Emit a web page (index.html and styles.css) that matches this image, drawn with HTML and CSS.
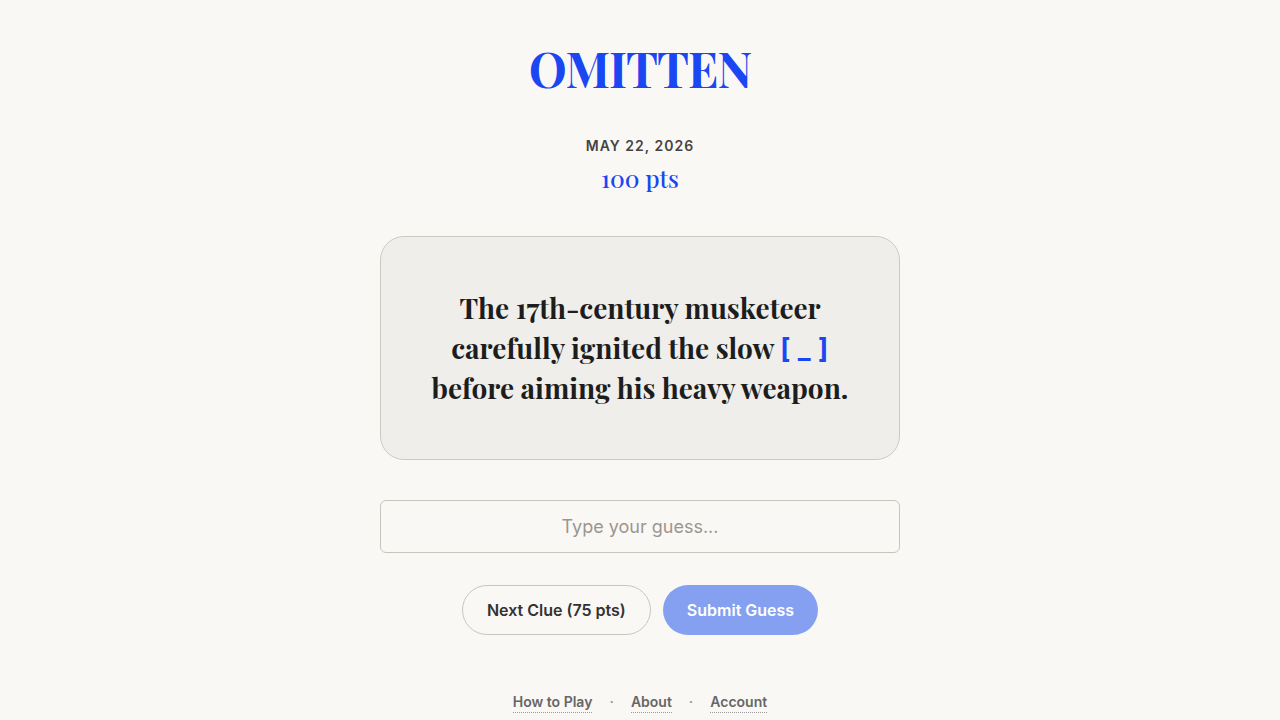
FILE: index.html
```html
<!DOCTYPE html>
<html lang="en">
<head>
    <meta charset="UTF-8">
    <meta name="viewport" content="width=device-width, initial-scale=1.0">
    <title>Omitten</title>
    <link rel="stylesheet" href="styles.css">
</head>
<body>

    <div class="page">
        <h1 class="logo">OMITTEN</h1>

        <div class="meta">
            <div class="date">MAY 22, 2026</div>
            <div class="points">100 pts</div>
        </div>

        <div class="clue-card">
            <p class="clue">The 17th-century musketeer carefully ignited the slow <span class="blank">[ _ ]</span> before aiming his heavy weapon.</p>
        </div>

        <input type="text" class="guess" placeholder="Type your guess...">

        <div class="actions">
            <button class="btn btn-outline" type="button">Next Clue (75 pts)</button>
            <button class="btn btn-primary" type="button">Submit Guess</button>
        </div>

        <nav class="footer">
            <a href="#">How to Play</a>
            <span class="dot">·</span>
            <a href="#">About</a>
            <span class="dot">·</span>
            <a href="#">Account</a>
        </nav>
    </div>

</body>
</html>
```

FILE: styles.css
```css
* {
    margin: 0;
    padding: 0;
    box-sizing: border-box;
}

body {
    background-color: #faf8f5;
    font-family: Inter, "Noto Sans", sans-serif;
    color: #1f1f1f;
}

.page {
    width: 520px;
    margin: 0 auto;
    display: flex;
    flex-direction: column;
    align-items: center;
    padding-top: 38px;
}

.logo {
    font-family: "Playfair Display", "Liberation Serif", serif;
    font-size: 48px;
    font-weight: 700;
    line-height: 60px;
    color: #1a47f2;
    letter-spacing: -1px;
}

.meta {
    margin-top: 38px;
    text-align: center;
}

.date {
    font-size: 14px;
    font-weight: 600;
    letter-spacing: 1px;
    color: #444;
    line-height: 20px;
}

.points {
    font-family: "Playfair Display", "Liberation Serif", serif;
    font-size: 24px;
    font-weight: 500;
    color: #1a47f2;
    line-height: 30px;
    margin-top: 7px;
}

.clue-card {
    width: 520px;
    height: 224px;
    margin-top: 43px;
    background-color: #efeeeb;
    border: 1px solid #cdcac4;
    border-radius: 24px;
    display: flex;
    align-items: center;
    justify-content: center;
    padding: 0 40px;
}

.clue {
    font-family: "Playfair Display", "Liberation Serif", serif;
    font-size: 28px;
    font-weight: 700;
    line-height: 40px;
    text-align: center;
    color: #1d1d1d;
}

.blank {
    color: #1a47f2;
    font-family: Inter, sans-serif;
    font-weight: 700;
    font-size: 27px;
    letter-spacing: 0.5px;
    line-height: 20px;
    vertical-align: 1px;
}

.guess {
    width: 520px;
    height: 53px;
    margin-top: 40px;
    border: 1px solid #c9c5be;
    border-radius: 6px;
    background-color: #faf8f5;
    font-family: Inter, sans-serif;
    font-size: 18px;
    text-align: center;
    color: #333;
}

.guess::placeholder {
    color: #9a9690;
}

.actions {
    display: flex;
    gap: 12px;
    margin-top: 32px;
}

.btn {
    height: 50px;
    border-radius: 25px;
    font-family: Inter, sans-serif;
    font-size: 16px;
    font-weight: 600;
    padding: 0 24px;
    cursor: pointer;
}

.btn-outline {
    background-color: transparent;
    border: 1px solid #c9c5be;
    color: #333;
}

.btn-primary {
    background-color: #86a0f1;
    border: none;
    color: #fff;
}

.footer {
    margin-top: 57px;
    display: flex;
    gap: 17px;
    font-size: 14px;
    font-weight: 600;
    line-height: 20px;
}

.footer a {
    color: #666;
    text-decoration: none;
    border-bottom: 1px dotted #999;
}

.dot {
    color: #999;
}
```
